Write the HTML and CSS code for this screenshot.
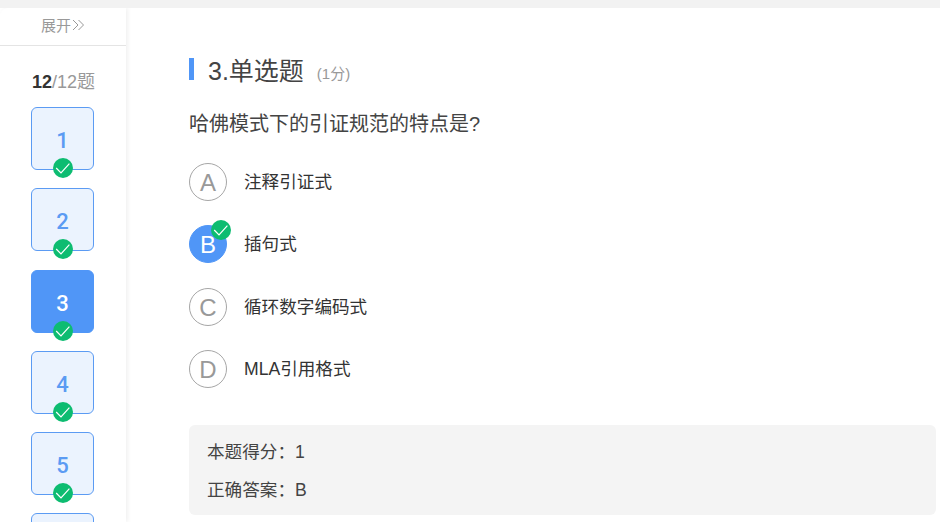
FILE: index.html
```html
<!DOCTYPE html>
<html lang="zh-CN">
<head>
  <meta charset="UTF-8" />
  <title>单选题</title>
  <link rel="stylesheet" href="styles.css">
</head>
<body>
  <svg class="svg-defs" width="0" height="0">
    <symbol id="done" viewBox="0 0 20 20">
      <circle cx="10" cy="10" r="10" fill="#0dbc71" />
      <path d="M3.2 10 L8 14.8 L16.4 5.6" fill="none" stroke="#fff" stroke-width="1.2" />
    </symbol>
  </svg>

  <div class="page">
    <aside class="sidebar">
      <div class="expand">展开<svg class="chevrons" width="13" height="12" viewBox="0 0 13 12"><path d="M1 1 L6 6 L1 11 M6.5 1 L11.5 6 L6.5 11" fill="none" stroke="#999" stroke-width="1" /></svg></div>
      <div class="progress"><b>12</b>/12题</div>
      <div class="cards">
        <div class="card">1<svg class="card-check"><use href="#done" /></svg></div>
        <div class="card">2<svg class="card-check"><use href="#done" /></svg></div>
        <div class="card current">3<svg class="card-check"><use href="#done" /></svg></div>
        <div class="card">4<svg class="card-check"><use href="#done" /></svg></div>
        <div class="card">5<svg class="card-check"><use href="#done" /></svg></div>
        <div class="card"></div>
      </div>
    </aside>

    <main class="question">
      <h2 class="question-title"><span class="title-text">3.单选题</span><span class="points">(1分)</span></h2>
      <div class="stem">哈佛模式下的引证规范的特点是?</div>

      <div class="option"><span class="letter">A</span><span class="option-text">注释引证式</span></div>
      <div class="option"><span class="letter selected">B<svg class="option-check"><use href="#done" /></svg></span><span class="option-text">插句式</span></div>
      <div class="option"><span class="letter">C</span><span class="option-text">循环数字编码式</span></div>
      <div class="option"><span class="letter">D</span><span class="option-text">MLA引用格式</span></div>

      <div class="result">
        <div>本题得分：1</div>
        <div>正确答案：B</div>
      </div>
    </main>
  </div>
</body>
</html>
```

FILE: styles.css
```css
html, body {
  height: 100%;
}

body {
  margin: 0;
  background-color: #f2f2f2;
  color: #333;
  font-family: "Liberation Sans", "Noto Sans CJK SC", sans-serif;
  overflow: hidden;
}

.svg-defs {
  display: block;
}

.page {
  display: flex;
  height: 514px;
  margin-top: 8px;
  background-color: #fff;
  overflow: hidden;
}

.sidebar {
  flex: none;
  width: 126px;
  border-top-left-radius: 8px;
  background-color: #fff;
  box-shadow: 2px 0 4px rgba(0, 0, 0, 0.06);
}

.expand {
  display: flex;
  align-items: center;
  justify-content: center;
  gap: 1px;
  box-sizing: border-box;
  height: 38px;
  padding-bottom: 4px;
  border-bottom: 1px solid #e4e4e4;
  color: #999;
  font-size: 15px;
}

.progress {
  margin-top: 24px;
  height: 24px;
  line-height: 24px;
  padding-left: 32px;
  color: #999;
  font-size: 18px;
  white-space: nowrap;
}

.progress b {
  color: #333;
}

.cards {
  display: flex;
  flex-direction: column;
  gap: 18.25px;
  margin-top: 13px;
  padding-left: 31px;
}

.card {
  position: relative;
  flex: none;
  box-sizing: border-box;
  width: 63px;
  height: 63px;
  padding-top: 19px;
  border: 1px solid #5b9bf3;
  border-radius: 6px;
  background-color: #ebf3fe;
  color: #5b9bf3;
  font-family: Roboto, sans-serif;
  font-size: 22px;
  font-weight: 500;
  line-height: 28px;
  text-align: center;
}

.card.current {
  background-color: #5096f7;
  border-color: #5096f7;
  color: #fff;
}

.card-check {
  position: absolute;
  left: 21px;
  bottom: -9px;
  width: 20px;
  height: 20px;
}

.question {
  flex: 1;
  padding: 46px 4px 0 63px;
}

.question-title {
  display: flex;
  align-items: center;
  height: 30px;
  margin: 0;
  font-weight: normal;
}

.question-title::before {
  content: "";
  flex: none;
  width: 5px;
  height: 22px;
  margin-right: 14px;
  background-color: #5096f7;
}

.title-text {
  color: #444;
  font-size: 25px;
}

.points {
  margin-left: 13px;
  margin-top: 7px;
  color: #999;
  font-size: 15px;
}

.stem {
  margin-top: 26px;
  margin-bottom: 25px;
  height: 28px;
  line-height: 28px;
  color: #444;
  font-size: 20px;
}

.option {
  display: flex;
  align-items: center;
  gap: 17px;
  height: 38px;
  margin-bottom: 24.33px;
  color: #333;
  font-size: 17.6px;
}

.option-text {
  padding-bottom: 3px;
}

.letter {
  position: relative;
  flex: none;
  box-sizing: border-box;
  width: 38px;
  height: 38px;
  border: 1px solid #a6a6a6;
  border-radius: 50%;
  color: #999;
  font-size: 24px;
  line-height: 38px;
  text-align: center;
}

.letter.selected {
  background-color: #5096f7;
  border-color: #5096f7;
  color: #fff;
}

.option-check {
  position: absolute;
  top: -6px;
  right: -5px;
  width: 20px;
  height: 20px;
}

.result {
  box-sizing: border-box;
  height: 90px;
  margin-top: 37.5px;
  padding: 8px 18px;
  border-radius: 6px;
  background-color: #f4f4f4;
  color: #444;
  font-size: 17.6px;
  line-height: 38px;
}
```
